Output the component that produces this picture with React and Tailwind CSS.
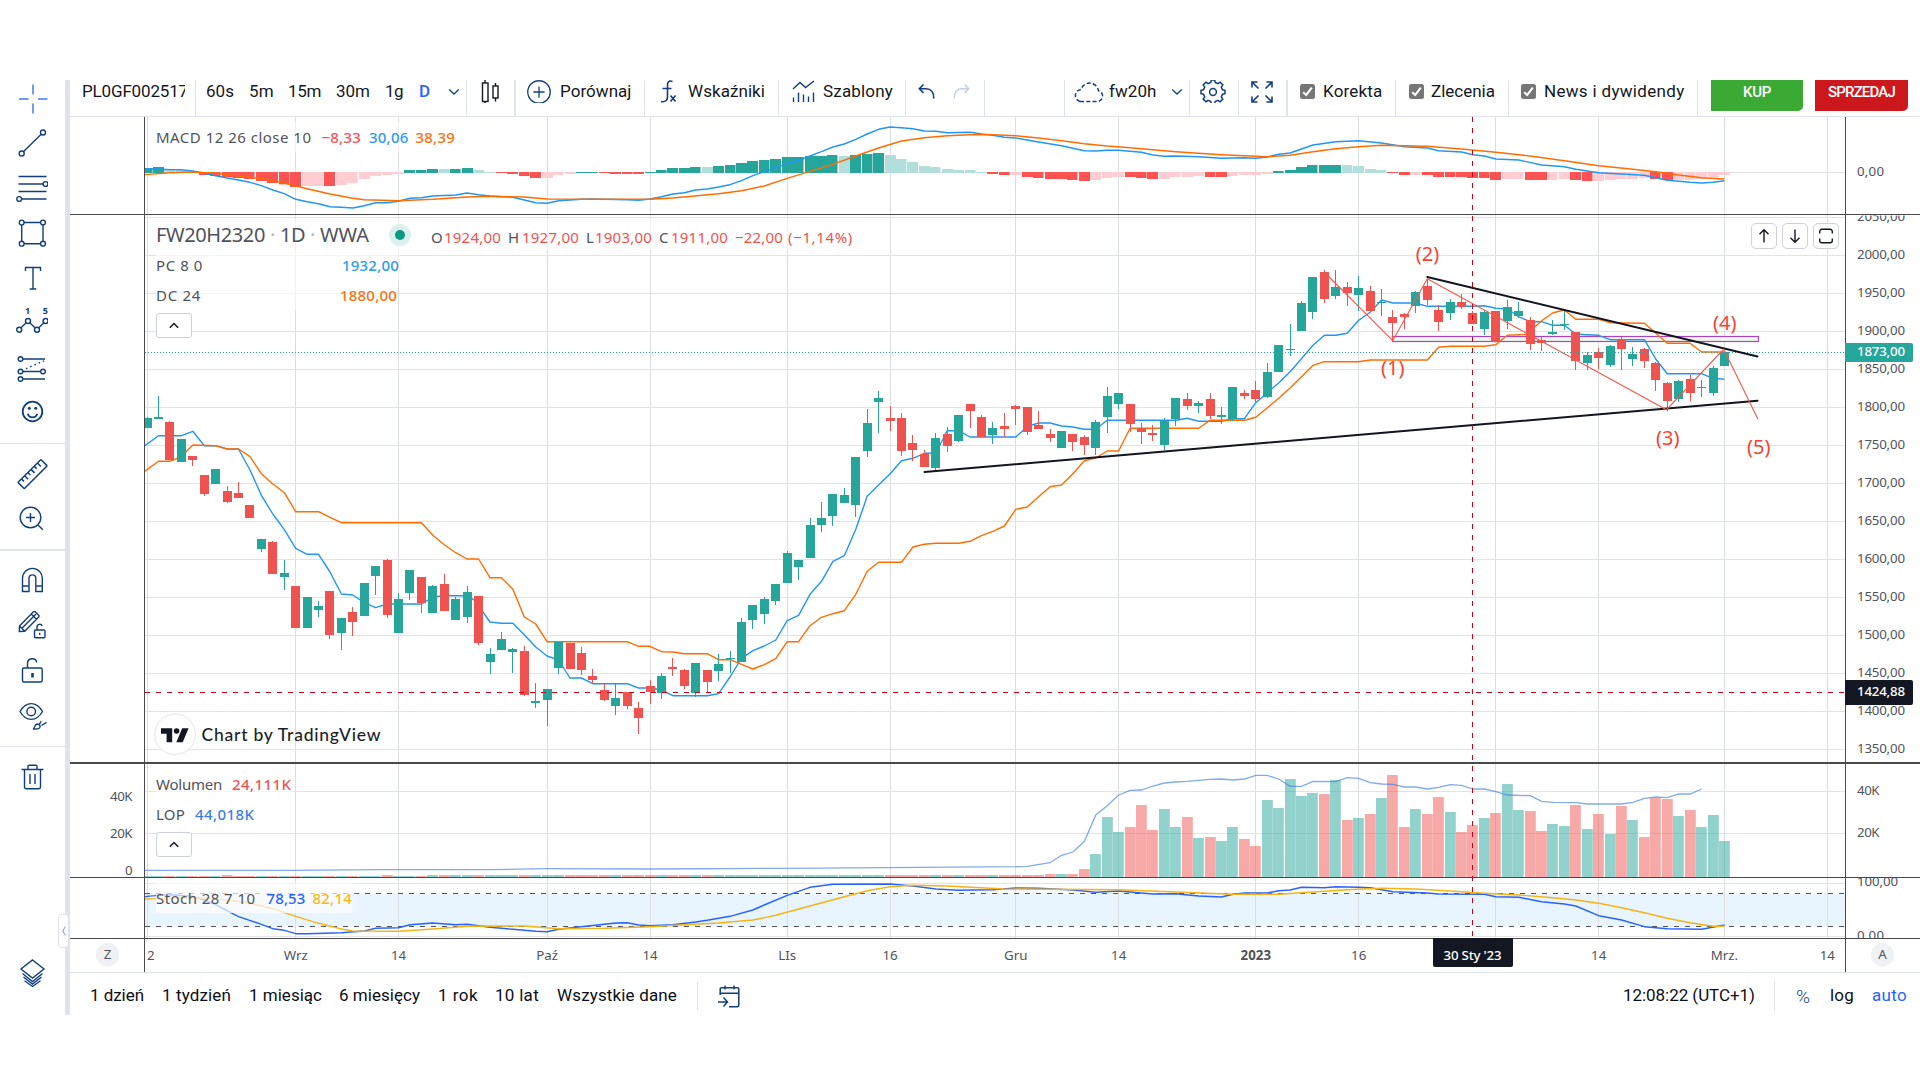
import React, { useLayoutEffect, useRef, useState } from "react";

/* Label whose tracking is computed so that it fills the given width. */
function Fit({ w, className = "", children }) {
  const ref = useRef(null);
  const [ls, setLs] = useState(0);
  useLayoutEffect(() => {
    const n = String(children).length;
    setLs((w - ref.current.getBoundingClientRect().width) / n);
  }, []);
  return (
    <span ref={ref} className={"inline-block shrink-0 whitespace-pre " + className} style={{ letterSpacing: ls }}>
      {children}
    </span>
  );
}

/* ---------- chart data (vertical values in thirds of a pixel) ---------- */

const X = (i) => 147.1 + 11.43 * i;
const U = 1;
const D = 0;

// [bodyTop, bodyBottom, high, low, direction]
const C1 = [
  [54,84,50,84,U],[51,57,-12,57,U],[66,180,63,180,D],[117,186,117,186,U],[168,180,168,198,D],[225,282,225,288,D],[207,252,207,252,U],
  [273,306,258,309,D],[279,294,246,294,D],[315,354,315,354,D],[417,447,417,456,U],[426,522,423,522,D],[519,531,480,570,U],
  [558,684,558,684,D],[591,684,591,684,U],[618,630,603,651,U],[573,705,573,717,D],[654,699,654,750,U],[636,666,621,708,D],
  [549,648,549,648,U],[498,528,498,585,U],[480,645,477,654,D],[597,699,579,699,U],[510,579,510,600,U],[531,609,531,639,D],
  [558,639,555,639,U],[552,633,522,633,D],[597,660,591,660,U],[576,651,558,669,U],[588,729,588,735,D],[762,786,744,822,U],
  [717,750,696,750,U],[747,756,744,819,U],[753,885,738,888,D],[903,909,849,924,U],[867,900,867,978,U],[726,804,726,822,U],
  [729,807,729,807,D],[759,810,741,825,D],[828,840,807,852,D],[870,900,852,903,D],[894,918,852,945,U],[876,918,876,927,D],
  [924,954,906,1002,D],[858,876,840,912,D],[828,879,819,897,U],[801,807,774,828,D],[810,858,807,867,D],[789,879,789,891,U],
  [810,846,810,879,D],[792,813,762,843,U],[774,777,753,819,U],[666,786,654,786,U],[615,660,615,687,U],[597,642,591,672,U],
  [552,603,552,615,U],[459,549,453,549,U],[480,501,480,540,U],[375,474,354,474,U],[354,375,306,396,U],[282,348,282,378,U],
  [285,309,264,309,U],[171,315,171,351,U],[69,153,27,171,U],[-6,6,-27,99,U],[54,63,18,93,D],[54,153,39,168,D],[129,150,105,183,D],
  [162,201,150,201,D],[114,204,99,213,U],[102,138,81,156,D],[45,123,45,126,U],[12,33,12,84,D],[51,111,45,111,D],[84,105,66,132,U],
  [78,87,39,111,D],[18,27,15,75,D],[21,96,21,105,D],[75,87,33,87,D],[102,114,87,126,D],[93,144,93,144,U],[102,126,102,153,D],
  [111,135,105,165,D],[66,144,60,165,U],[-12,51,-39,99,U],[-21,12,-21,27,U],[12,72,12,96,D],[84,96,69,132,D],[99,105,75,123,D],
  [63,135,54,150,U],[-6,57,-6,78,U],[-3,18,-21,30,D],[9,18,3,39,U],[-3,48,-21,57,D],[45,51,21,72,U],[-39,57,-39,63,U],
  [-21,-12,-30,-3,D],[-30,-3,-57,6,D],[-84,-9,-111,-6,U],
].map(([a,b,c,d,e]) => [a+1200,b+1200,c+1200,d+1200,e]);
const C2 = [
  [825,906,825,906,U],[837,840,762,858,U],[699,783,693,783,U],[621,726,621,747,U],[606,687,600,699,D],[651,678,600,687,U],
  [651,669,636,708,D],[654,675,618,723,U],[663,723,648,723,D],[695,698,657,738,U],[741,759,720,808,D],[732,741,729,777,D],
  [666,708,663,729,U],[648,690,627,705,D],[720,756,705,783,D],[696,729,687,750,U],[696,711,672,717,D],[729,762,724,762,D],
  [726,777,720,795,U],[723,816,723,816,D],[711,753,690,777,U],[723,738,696,745,U],[750,822,741,840,D],[810,819,801,843,D],
  [786,792,750,795,U],[762,765,720,780,U],[786,873,786,900,D],[855,879,846,900,U],[846,864,834,897,D],[828,885,825,891,U],
  [807,837,801,900,D],[852,867,831,888,U],[837,873,834,894,D],[879,930,876,963,D],[939,993,936,1022,D],[933,987,930,996,U],
  [927,969,915,993,D],[951,954,930,981,U],[894,969,888,978,U],[846,888,846,888,U],
].map(([a,b,c,d,e]) => [a+210,b+210,c+210,d+210,e]);
const CANDLES = C1.concat(C2);

// line helpers: flat lists of index, value
const pts = (list, base) => {
  const out = [];
  for (let k = 0; k < list.length; k += 2) out.push(X(list[k]).toFixed(1) + "," + ((list[k + 1] + base) / 3).toFixed(1));
  return out.join(" ");
};

const PC_A = [-0.25,139,1,107,3,107,4,94,5,137,6,137,7,147,8,147,9,210,10,286,11,342,12,389,13,445,14,463,15,463,16,516,17,582,18,585,19,608,20,623,21,612,24,612,25,591,26,587,28,587,28.7,602,30,666,31,670,32,670,33,704,34,741,35,768,36,780,37,834,38,834,39,851,42,851,43,864,44,864,45,870,46,887,49,887,50,881,51,831,52,775,53,752,54,738,55,720,56,662,57,646,58,583,59,544,60,484,61,467,62,388,63,289,64,255,65,222,66,182,67,175,68,160,69,160,70,92,71,92,72,111,76,111,77,80,78,69,79,69,80,78,81,81,82,88,83,88,84,61,90,61,91,55,92,64,94,64,95,56,96,56,97,8,98,-22];
const PC_B = [99.1,936,100,905,101,866,102,826,103,796,104,796,105,790,106,751,107,727,108,690,109,699,111,699,112,709,116,709,117,707,118,715,119,716,120,740,121,755,122,755,123,766,124,766,125,792,126,794,127,796,128,809,131,809,132,868,133,911,136,911,137,925,138,928];
const DC_A = [-0.25,215,1,184,2,184,3,170,4,135,6,137,7,147,8,147,9,170,10,221,11,252,12,278,13,335,15,335,16,352,17,368,24,368,25,406,26,434,27,458,28,477,29,477,30,533,31,533,32,568,33,651,34,672,35,725,42,725,43,739,44,739,45,755,46,756,47,761,49,761,50,779,51,779,52,793,53,807,54,794,55,776,56,725,57,725,58,677,59,652,60,641,61,632,62,583,63,514,64,487,66,487,67,441,68,433,69,430,71,430,72,424,73,407,74,394,75,378,76,328,77,321,78,290,79,260,80,255,81,221,82,182,83,174,84,153,85,153,86,85,92,85,93,61,96,61,97,52,98,24];
const DC_B = [99.1,982,100,954,101,920,102,886,103,875,106,875,107,870,112,870,113,832,114,829,117,829,118,824,119,796,120.7,793,122,752,123,728,124,720,125,748,127,748,128,758,131,760,133,820,135,820,136,846,138,846];
const MACD_B = [-0.25,296,1,296,2,298,3,298,4,302,5,309,6,316,7,323,8,329,9,336,10,346,11,359,12,370,13,387,14,394,15,400,16,409,17,411,18,413,19,406,20,397,21,397,22,393,23,384,24,382,25,377,27,374,28,368,29,373,30,377,31,379,32,381,33,389,34,397,35,399,36,391,38,387,39,386,42,388,43,390,44,386,45,379,46,371,47,367,48,359,49,356,50,350,51,343,52,331,53,316,54,304,55,292,56,279,57,270,58,257,59,244,60,230,61,221,62,207,63,191,64,177,65,170,66,172,67,175,68,182,69,183,70,187,72,186,73,191,74,195,75,201,76,203,77,209,78,215,80,226,82,241,83,242,84,240,85,240,87,246,88,254,89,258,90,257,92,259,94,264,96,262,97,264,98,260,99,252,100,248,101,236,102,224,104,214,106,211,108,218,110,229,112,233,113,241,115,245,116,253,117,257,118,266,120,269,122,284,124,289,125,297,127,307,129,311,131,315,133,330,135,336,136,338,137,336,138,331];
const MACD_O = [-0.25,313,2,307,4,305,6,309,8,317,10,325,12,338,14,355,16,371,18,384,19,388,22,391,25,387,28,380,30,378,33,380,35,386,40,387,44,387,46,383,50,370,52,361,54,347,56,324,58,303,60,282,62,257,64,233,66,212,68,202,70,196,72,193,74,193,76,196,78,203,80,211,82,220,84,227,86,232,90,244,94,253,98,259,99,257,100,255,102,244,104,235,106,229,108,225,110,226,112,228,115,236,118,246,121,257,124,271,127,286,130,297,132,304,134,314,136,322,138,326];
const HIST = "294G 291G 301g 301g 304g 315R 318R 322R 324R 327R 333R 339R 343R 351R 348r 348r 348R 345r 339r 327r 318r 315r 312r 300G 300G 297G 297g 297G 294G 300g 306g 309R 312R 318R 324R 324r 315r 312r 306G 306G 309R 312R 312R 312R 306G 300G 294G 294G 291G 291g 288G 285G 279G 273G 270G 267G 261G 261G 258G 258G 255G 258g 255G 252G 249G 255g 267g 276g 288g 291g 297g 300g 300g 306g 312R 315R 315r 321R 324R 327R 327R 330R 333R 330r 324r 321r 321R 324R 327R 327r 321r 321r 318r 321R 321R 318r 315r 315r 312r 303G 300G 291G 285G 285G 285G 285g 288g 297g 300g 309R 315R 315r 315R 321R 321R 321R 324R 324R 330R 327r 327r 330R 330R 330r 327r 330R 333R 333r 330r 327r 327r 324r 327R 330R 330r 330r 327r 321r 315r".split(" ");
const HC = { G: "#26a69a", g: "#b2dfdb", R: "#ff5252", r: "#ffcdd2" };
const VOL = [432,432,432,417,372,261,306,291,225,300,237,291,261,324,321,333,291,327,348,210,234,147,198,189,192,150,270,264,252,204,135,291,237,252,201,246,306,285,264,249,162,240,243,303,282,288,225,297,252,312,228,270,321,204,207,258,240,291,255,333];
const volTop = (i) => (i >= 79 ? VOL[i - 79] : i === 7 || i === 21 || i >= 25 ? 435 : 438);
const LOP = [-0.25,421,13,421,20,419,30,419,35,416,44,417,56,415,76,410,77,409,79,398,80,376,81,366,82,334,83,255,84,227,85,195,86,181,87,180,88,168,89,159,90,156,91,154,93,148,94,147,95,150,96,147,97,136,98,136,99,147,100,169,101,169,102,154,104,155,105,143,106,145,107,158,108,162,109,163,110,171,111,171,112,177,113,172,114,164,115,166,116,177,117,177,118,185,119,195,121,197,122,214,123,217,125,218,126,222,129,222,130,217,131,205,132,201,133,203,134,192,135,192,136,177];
const ST_B = [-0.25,500,1,496,2,494,4,499,5,510,6,524,7,542,8,560,10,583,11,596,12,601,13,611,14,611,17,608,19,603,20,595,22,593,23,584,25,579,27,584,28,583,30,592,32,598,34,604,35,605,36,598,38,590,41,579,42,578,43,585,44,587,46,584,48,576,49,571,51,559,53,540,54,525,56,496,58,472,60,463,65,462,67,468,69,477,71,481,74,479,76,474,78,475,81,480,83,487,85,483,86,486,88,492,90,491,92,498,94,501,95,493,96,489,98,489,99,482,100,480,101,472,103,473,104,470,106,472,107,473,108,479,109,485,112,489,113,492,117,493,118,500,120,502,122,515,124,522,125,528,127,557,129,570,131,590,133,596,136,598,138,585];
const ST_O = [-0.25,507,2,504,5,504,7,510,9,519,11,536,13,559,15,580,17,597,18,603,22,604,25,597,28,589,33,588,36,596,40,595,44,590,47,584,50,579,53,570,55,556,58,528,61,500,63,482,65,470,67,466,70,468,75,477,85,479,90,486,95,493,99,493,102,486,105,479,108,475,111,477,114,483,117,490,120,495,123,503,125,510,127,520,129,533,131,548,133,565,135,578,137,589,138,589];

const GRID = [0, 13, 22, 35, 44, 56, 65, 76, 85, 97, 106, 118, 127, 138, 147];
const TIMES = ["", "Wrz", "14", "Paź", "14", "LIs", "16", "Gru", "14", "2023", "16", "", "14", "Mrz.", "14"];
const PRICES = Array.from({ length: 15 }, (_, k) => 2050 - 50 * k);
const py = (p) => 255.4 + (2000 - p) * 0.76;

function AxisText({ x, y, children, anchor = "start", fill = "#50535b", weight = 400, len }) {
  return (
    <text x={x} y={Number(y) + 4.7} textAnchor={anchor} fill={fill} fontWeight={weight} textLength={len} fontSize="13.3">
      {children}
    </text>
  );
}

function Chart() {
  return (
    <svg className="block font-['Noto_Sans','Open_Sans',sans-serif]" width="1850" height="855" viewBox="70 117 1850 855">
      <defs>
        <clipPath id="plot"><rect x="145" y="117" width="1700" height="821" /></clipPath>
        <clipPath id="mainAxis"><rect x="1846" y="215.5" width="74" height="547" /></clipPath>
        <clipPath id="stochAxis"><rect x="1846" y="878" width="74" height="60" /></clipPath>
      </defs>

      <rect x="145" y="893.5" width="1700" height="33" fill="#e8f4fe" />
      <g fill="#e3e3e4" shapeRendering="crispEdges">
        {GRID.map((i) => <rect key={i} x={Math.floor(X(i))} y="117" width="1" height="821" fill="#dcdfe2" />)}
        {PRICES.map((p) => <rect key={p} x="145" y={Math.floor(py(p))} width="1700" height="1" />)}
        {[172, 791, 833, 883, 936].map((y) => <rect key={y} x="145" y={y} width="1700" height="1" />)}
      </g>

      <g clipPath="url(#plot)">
        {HIST.map((h, i) => {
          const v = parseInt(h, 10);
          const c = h.slice(-1);
          const up = c === "G" || c === "g";
          const y0 = up ? v : 306;
          const y1 = up ? 309 : v;
          return <rect key={i} x={Math.round(X(i) - 5.5)} y={(y0 + 210) / 3} width={i % 3 ? 11 : 10.5} height={Math.max(1, (y1 - y0) / 3)} fill={HC[c]} />;
        })}
        <g fill="none" strokeWidth="1.4" strokeLinejoin="round">
          <polyline points={pts(MACD_B, 211)} stroke="#2196f3" />
          <polyline points={pts(MACD_O, 211)} stroke="#ff6d00" />
        </g>

        {CANDLES.map((c, i) => {
          const y = 877 - (2190 + volTop(i)) / 3;
          return <rect key={i} x={Math.round(X(i) - 5.5)} y={877 - y} width="10.8" height={y} fill={c[4] ? "#26a69a" : "#ef5350"} fillOpacity="0.5" />;
        })}
        <polyline points={pts(LOP, 2190)} fill="none" stroke="#3f7fe0" strokeOpacity="0.66" strokeWidth="1.3" />

        <g stroke="#50535e" strokeDasharray="5 6" shapeRendering="crispEdges">
          <line x1="145" x2="1845" y1="893.5" y2="893.5" />
          <line x1="145" x2="1845" y1="926.5" y2="926.5" />
        </g>
        <g fill="none" strokeWidth="1.4" strokeLinejoin="round">
          <polyline points={pts(ST_B, 2190)} stroke="#2962ff" />
          <polyline points={pts(ST_O, 2190)} stroke="#f5b315" />
        </g>

        <rect x="1392.5" y="336.5" width="366" height="5" fill="#eef7ee" stroke="#a846bf" strokeWidth="1.2" />
        <g fill="none" strokeWidth="1.4" strokeLinejoin="round">
          <polyline points={pts(PC_A, 1200) + " " + pts(PC_B, 210)} stroke="#2196f3" />
          <polyline points={pts(DC_A, 1200) + " " + pts(DC_B, 210)} stroke="#ff6d00" />
        </g>
        {CANDLES.map(([t, b, h, l, up], i) => (
          <g key={i} fill={up ? "#26a69a" : "#ef5350"} shapeRendering="crispEdges">
            <rect x={Math.round(X(i) - 0.5)} y={h / 3} width="1" height={(l - h) / 3} />
            <rect x={Math.round(X(i) - 4.5)} y={t / 3} width="9" height={Math.max(1, (b - t) / 3)} />
          </g>
        ))}
        <line x1="145" x2="1845" y1="352.5" y2="352.5" stroke="#26a69a" strokeDasharray="1 2" shapeRendering="crispEdges" />
        <g stroke="#12141f" strokeWidth="2" strokeLinecap="round">
          <line x1="924.5" y1="472" x2="1757.5" y2="400.7" />
          <line x1="1427.3" y1="277" x2="1757.5" y2="356.5" />
        </g>
        <polyline points="1328.2,276 1392.7,340.7 1427.3,278.7 1666.5,409.7 1723.7,349.3 1758,419.3" fill="none" stroke="#f4574d" strokeWidth="1.1" />
        <line x1="145" x2="1845" y1="692.5" y2="692.5" stroke="#cc0014" strokeDasharray="5 6" shapeRendering="crispEdges" />
        <line x1="1472.5" x2="1472.5" y1="117" y2="938" stroke="#cc0014" strokeDasharray="5 6" shapeRendering="crispEdges" />
        <g fill="#f44336" textAnchor="middle" fontSize="20">
          <text x="1392.7" y="375">(1)</text>
          <text x="1427.5" y="261">(2)</text>
          <text x="1667.8" y="445">(3)</text>
          <text x="1724.8" y="330">(4)</text>
          <text x="1758.8" y="454">(5)</text>
        </g>
      </g>

      <g>
        <circle cx="175" cy="734.3" r="20.3" fill="#fff" stroke="#e6e6e8" />
        <g fill="#131722">
          <path d="M161 728.2h11.2v14h-5.6v-8.4H161z" />
          <circle cx="176.6" cy="731" r="2.8" />
          <path d="M182.2 728.2h6.4l-5.9 14h-6.4z" />
        </g>
        <text x="201.5" y="741" fontSize="17.5" fill="#1c1e28" fontWeight="500" textLength="179" className="font-['Lato',sans-serif]">Chart by TradingView</text>
      </g>

      <g fill="#4a4a4c" shapeRendering="crispEdges">
        <rect x="70" y="214" width="1850" height="1" />
        <rect x="70" y="762" width="1850" height="2" />
        <rect x="70" y="877" width="1850" height="1" />
        <rect x="70" y="938" width="1850" height="1" />
        <rect x="144" y="117" width="1" height="855" />
        <rect x="1845" y="117" width="1" height="855" />
      </g>

      <AxisText x="1857" y="171" len="27">0,00</AxisText>
      <g clipPath="url(#mainAxis)">
        {PRICES.map((p) => <AxisText key={p} x="1857" y={py(p) - 1.6} len="48">{p + ",00"}</AxisText>)}
      </g>
      <AxisText x="1857" y="790.7" len="22.5">40K</AxisText>
      <AxisText x="1857" y="832.7" len="22.5">20K</AxisText>
      <g clipPath="url(#stochAxis)">
        <AxisText x="1857" y="881.5" len="41">100,00</AxisText>
        <AxisText x="1857" y="935" len="27">0,00</AxisText>
      </g>
      <AxisText x="132.5" y="796.7" anchor="end" len="22.5">40K</AxisText>
      <AxisText x="132.5" y="833.7" anchor="end" len="22.5">20K</AxisText>
      <AxisText x="132.5" y="870" anchor="end">0</AxisText>

      {GRID.map((g, k) => TIMES[k] && <AxisText key={g} x={X(g)} y={955.2} anchor="middle" weight={TIMES[k] === "2023" ? 700 : 400}>{TIMES[k]}</AxisText>)}
      <AxisText x="147" y={955.2}>2</AxisText>

      <path d="M1845 343h66a2 2 0 0 1 2 2v15a2 2 0 0 1-2 2h-66z" fill="#26a69a" />
      <AxisText x="1857" y="351.5" fill="#fff" weight="500" len="48">1873,00</AxisText>
      <path d="M1845 680h66a2 2 0 0 1 2 2v21a2 2 0 0 1-2 2h-66z" fill="#131722" />
      <AxisText x="1857" y="691.5" fill="#fff" weight="500" len="48">1424,88</AxisText>
      <path d="M1433 938h80v27a2 2 0 0 1-2 2h-76a2 2 0 0 1-2-2z" fill="#131722" />
      <AxisText x="1472.5" y="955.2" fill="#fff" weight="500" anchor="middle" len="58">30 Sty '23</AxisText>

      <circle cx="107.5" cy="954.7" r="11.7" fill="#f0f1f5" />
      <AxisText x="107.5" y="954.5" anchor="middle">Z</AxisText>
      <circle cx="1882.5" cy="954.7" r="11.7" fill="#f0f1f5" />
      <AxisText x="1882.5" y="954.5" anchor="middle">A</AxisText>
    </svg>
  );
}

/* ---------- icons ---------- */

function Ico({ s = 32, color = "#123f7c", sw = 1.4, className = "", children }) {
  return (
    <svg width={s} height={s} viewBox="0 0 32 32" fill="none" stroke={color} strokeWidth={sw} className={"shrink-0 " + className}>
      {children}
    </svg>
  );
}

const Chevron = ({ className = "" }) => (
  <svg width="12" height="8" viewBox="0 0 12 8" fill="none" stroke="#1b4782" strokeWidth="1.4" className={"shrink-0 " + className}><path d="M1.2 1.5 6 6l4.8-4.5" /></svg>
);

const Check = () => (
  <svg width="15" height="15" viewBox="0 0 15 15" className="shrink-0"><rect width="15" height="15" rx="2.5" fill="#767676" /><path d="M3.2 8.2 6.2 11 11.8 3.6" fill="none" stroke="#fff" strokeWidth="2.1" /></svg>
);

const SideBtn = ({ className, children }) => <button className={"flex w-full items-center justify-center pr-px " + className}>{children}</button>;

function Sidebar() {
  return (
    <aside className="relative flex h-[935px] w-[70px] shrink-0 flex-col border-r-[5px] border-[#e0e3eb]">
      <SideBtn className="mb-[3px] h-[38px]">
        <Ico color="#4a78f5" sw={1.5}><path d="M17 1.500v10M17 20.500v10M3 16h9.500M22 16h9.500" /></Ico>
      </SideBtn>
      <SideBtn className="h-[45px] pb-px">
        <Ico><circle cx="5.700" cy="26.500" r="2.500" /><circle cx="27" cy="5.500" r="2.500" /><path d="M7.600 24.600 25.200 7.300" /></Ico>
      </SideBtn>
      <SideBtn className="h-[45px] pb-px">
        <Ico><path d="M2.500 4.500h28M2.500 12h24.500M2.500 19.500h28M5.500 27h25" /><circle cx="29.500" cy="12" r="2.400" /><circle cx="3.200" cy="27" r="2.400" /></Ico>
      </SideBtn>
      <SideBtn className="h-[45px] pb-px">
        <Ico><circle cx="5.700" cy="5.500" r="2.400" /><circle cx="27" cy="5.500" r="2.400" /><circle cx="5.700" cy="26.700" r="2.400" /><circle cx="27" cy="26.700" r="2.400" /><path d="M8 5.500h16.600M8 26.700h16.600M5.700 8v16.300M27 8v16.300" /></Ico>
      </SideBtn>
      <SideBtn className="h-[45px] pb-px">
        <Ico><path d="M9.500 9V5.500h15V9M17 5.500v21.500M13.700 27h6.600" /></Ico>
      </SideBtn>
      <SideBtn className="h-[43px] pb-px">
        <Ico>
          <circle cx="3.200" cy="23.700" r="2.500" /><circle cx="12" cy="15" r="2.500" /><circle cx="21" cy="23.700" r="2.500" /><circle cx="29.600" cy="15" r="2.500" /><path d="m5 21.800 5.200-5M13.800 16.800l5.400 5.100M22.700 21.800l5.200-5" />
          <g fill="#123f7c" stroke="none" fontSize="9" fontWeight="700" textAnchor="middle" className="font-['Open_Sans',sans-serif]"><text x="11.700" y="8">1</text><text x="29.300" y="8">5</text></g>
        </Ico>
      </SideBtn>
      <SideBtn className="h-[48px]">
        <Ico><circle cx="4.500" cy="7" r="2.300" /><circle cx="4.500" cy="19.500" r="2.300" /><circle cx="27" cy="19.500" r="2.300" /><circle cx="4.500" cy="27" r="2.300" /><path d="M7 7h22M7 19.500h17.500M7 27h22" /><path d="M10 16.700 28 8.800" strokeDasharray="1.600 3" /></Ico>
      </SideBtn>
      <SideBtn className="h-[40px]">
        <Ico sw={1.8}><circle cx="16.500" cy="15.500" r="9.800" /><path d="M11.700 17.800a5 5 0 0 0 9.600 0" /><g fill="#123f7c" stroke="none"><circle cx="13.300" cy="12.300" r="1.500" /><circle cx="19.700" cy="12.300" r="1.500" /></g></Ico>
      </SideBtn>
      <div className="mt-[11px] h-px bg-[#e0e3eb]" />
      <SideBtn className="mt-2 h-11">
        <Ico sw={1.5}><g transform="translate(.4 .3) rotate(-45 16 16)"><rect x="0" y="11.500" width="32.500" height="9" rx="1" /><path d="M5 11.500v3.500M9.500 11.500v5M14 11.500v3.500M18.500 11.500v5M23 11.500v3.500M27.500 11.500v5" /></g></Ico>
      </SideBtn>
      <SideBtn className="h-11">
        <Ico><circle cx="14.500" cy="15.500" r="10.300" /><path d="M14.500 11v9M10 15.500h9M22 23l4.800 4.800" /></Ico>
      </SideBtn>
      <div className="mt-[9px] h-0.5 bg-[#e0e3eb]" />
      <SideBtn className="mt-[7px] h-11">
        <Ico><path d="M6.500 27.500V14.300a9.900 9.900 0 0 1 19.800 0v13.200h-6.500V14.300a3.400 3.400 0 0 0-6.800 0v13.200zM6.500 22h6.500M19.800 22h6.500" /></Ico>
      </SideBtn>
      <SideBtn className="h-[46px]">
        <Ico><path d="M3.500 17 17.500 2.800a1.200 1.200 0 0 1 1.700 0l3.500 3.400a1.200 1.200 0 0 1 0 1.700L8.700 22.200l-5.400.3zM3.500 17l5.200 5.200M6.200 19 20 5M15.200 5l5.200 5.200" /><rect x="18.500" y="21" width="10.500" height="7.800" rx="1" /><path d="M21 21v-3a2.700 2.700 0 0 1 5.200-1M23.700 23.700v2.300" /></Ico>
      </SideBtn>
      <SideBtn className="h-[45px] pb-px">
        <Ico><rect x="6.500" y="14" width="19.700" height="14" rx="1.500" /><path d="M11.500 14V9.500a4.700 4.700 0 0 1 9.300-1" /><path d="M16.500 19v4.500" strokeWidth="2.600" /></Ico>
      </SideBtn>
      <SideBtn className="h-[46px]">
        <Ico><path d="M4 11.500c6-10.500 16.500-10.500 22.500 0-6 10.500-16.500 10.500-22.500 0z" /><circle cx="15.200" cy="11.500" r="4.300" /><path d="M17 29c2.500-.7.800-4.500 4-5 2.800 0 4 2.300 2.500 4-1.500 1.300-4 1-6.500 1zM23.500 24.200l1.500-3M25.500 25.500l5-3.200" /></Ico>
      </SideBtn>
      <div className="mt-[7px] h-px bg-[#e0e3eb]" />
      <SideBtn className="mt-2 h-11">
        <Ico><path d="M5.500 8.500h22M8.500 8.500V26a1.800 1.800 0 0 0 1.800 1.800h12.400A1.800 1.800 0 0 0 24.500 26V8.500M12 8.500V5.300A1 1 0 0 1 13 4.300h7a1 1 0 0 1 1 1v3.200M14 13v10M19 13v10" /></Ico>
      </SideBtn>
      <SideBtn className="mt-[152px] h-11">
        <Ico><path d="M16.500 3 28 12 16.500 21 5 12zM6.500 16.500l10 8 10-8M7.500 20l9 7 9-7M8.500 23.800l8 5.700 8-5.700" /></Ico>
      </SideBtn>
      <div className="absolute left-[58px] top-[834px] flex h-[34px] w-[11px] items-center justify-center rounded-[4px] border border-[#e0e3eb] bg-white">
        <svg width="4" height="10" viewBox="0 0 4 10" fill="none" stroke="#7f93ad"><path d="M3.400 .500 .800 5l2.600 4.500" /></svg>
      </div>
    </aside>
  );
}

function Cell({ w, thick, children }) {
  return (
    <div className={"flex h-[36px] shrink-0 items-start border-[#e0e3eb] " + (thick ? "border-r-2" : "border-r")} style={{ width: w }}>
      <div className="flex h-[23px] w-full items-center overflow-hidden">{children}</div>
    </div>
  );
}

const T = ({ w, className = "", children }) => <Fit w={w} className={"-mt-[2px] " + className}>{children}</Fit>;

function Toolbar() {
  return (
    <header className="flex h-[37px] border-b border-[#e0e3eb] text-[17px] leading-[22px] text-[#131722]">
      <Cell w={126}><div className="ml-3 flex w-[103px] overflow-hidden"><T w={106}>PL0GF002517</T></div></Cell>
      <Cell w={271}>
        <T w={28} className="ml-[10px]">60s</T>
        <T w={25} className="ml-[15px]">5m</T>
        <T w={33} className="ml-[14px]">15m</T>
        <T w={34} className="ml-[15px]">30m</T>
        <T w={18} className="ml-[15px]">1g</T>
        <T w={12} className="ml-[16px] font-medium text-[#2962ff]">D</T>
        <Chevron className="ml-[17px]" />
      </Cell>
      <Cell w={49} thick>
        <svg width="19" height="28" viewBox="0 0 19 28" fill="none" stroke="#131722" strokeWidth="1.400" className="ml-[14px] shrink-0"><path d="M4 1.500V5M4 23.500V27M14.500 5v3M14.500 20v3.500" /><rect x="1.500" y="5" width="5.500" height="18.500" /><rect x="12" y="8" width="5" height="12" /></svg>
      </Cell>
      <Cell w={129}>
        <Ico s={24} sw={1.7} className="ml-[11px]"><circle cx="16" cy="16" r="15" /><path d="M16 8.500v15M8.500 16h15" /></Ico>
        <T w={71.500} className="ml-[9px]">Porównaj</T>
      </Cell>
      <Cell w={134}>
        <svg width="18" height="23" viewBox="0 0 18 23" fill="none" stroke="#123f7c" strokeWidth="1.600" className="ml-[14px] shrink-0"><path d="M13.500 1.500C9.500 0 8.500 2.500 8.500 5v12c0 3-2 5.500-6.500 4.500M3.500 8.500h9M11.500 15.500l5 6M16.500 15.500l-5 6" /></svg>
        <T w={77} className="ml-[11px]">Wskaźniki</T>
      </Cell>
      <Cell w={127}>
        <svg width="23" height="23" viewBox="0 0 23 23" fill="none" stroke="#123f7c" strokeWidth="1.400" className="ml-[13px] shrink-0"><path d="M1 9 8 2.500l5.500 5L22 1M1.500 17.500V22M6.500 12.500V22M11.500 14.500V22M16.500 16.500V22M21.500 12.500V22" /></svg>
        <T w={70} className="ml-[8px]">Szablony</T>
      </Cell>
      <Cell w={79}>
        <svg width="17" height="17" viewBox="0 0 17 17" fill="none" stroke="#123f7c" strokeWidth="1.600" className="ml-[12px] shrink-0"><path d="M5.500 1.500 1.300 5.700l4.200 4.200M1.500 5.700H8c5 0 7.800 3.300 7.800 9.800" /></svg>
        <svg width="17" height="17" viewBox="0 0 17 17" fill="none" stroke="#c3cfdd" strokeWidth="1.600" className="ml-[18px] shrink-0"><path d="m11.500 1.500 4.200 4.200-4.200 4.200M15.500 5.700H9c-5 0-7.800 3.300-7.800 9.800" /></svg>
      </Cell>
      <Cell w={80} />
      <Cell w={125}>
        <svg width="31" height="22" viewBox="0 0 31 22" fill="none" stroke="#123f7c" strokeWidth="1.500" strokeDasharray="4 2.300" className="ml-[8px] shrink-0"><path d="M7 20.500h17.500a5.500 5.500 0 0 0 1-10.800A9 9 0 0 0 8 8.500a6.100 6.100 0 0 0-1 12z" /></svg>
        <T w={47.500} className="ml-[5px]">fw20h</T>
        <Chevron className="ml-[14px]" />
      </Cell>
      <Cell w={49}>
        <svg width="26" height="26" viewBox="0 0 26 26" fill="none" stroke="#123f7c" strokeWidth="1.500" className="ml-[10px] shrink-0"><circle cx="13" cy="13" r="3.400" /><path d="M10.800 3.500 11.300 1h3.400l.5 2.500 2.800 1.200 2.100-1.500 2.700 2.700-1.500 2.100 1.200 2.800 2.500.5v3.400l-2.500.5-1.200 2.800 1.500 2.100-2.700 2.700-2.100-1.500-2.800 1.200-.5 2.500h-3.400l-.5-2.500L8 21.300l-2.100 1.500-2.700-2.700L4.700 18l-1.200-2.800L1 14.700v-3.400l2.500-.5L4.700 8 3.200 5.900l2.700-2.700L8 4.700z" /></svg>
      </Cell>
      <Cell w={49} thick>
        <svg width="22" height="22" viewBox="0 0 22 22" fill="none" stroke="#123f7c" strokeWidth="1.600" className="ml-[12px] shrink-0"><path d="M1 6.500V1h5.500M15.500 1H21v5.500M21 15.500V21h-5.500M6.500 21H1v-5.500M1 1l6.500 6.500M21 1l-6.500 6.500M21 21l-6.500-6.500M1 21l6.500-6.500" /></svg>
      </Cell>
      <Cell w={108}><span className="ml-3" /><Check /><T w={59.500} className="ml-2">Korekta</T></Cell>
      <Cell w={113}><span className="ml-[13px]" /><Check /><T w={64} className="ml-[7px]">Zlecenia</T></Cell>
      <Cell w={189}><span className="ml-[12px]" /><Check /><T w={140.500} className="ml-2">News i dywidendy</T></Cell>
      <button className="ml-[13px] flex h-[31px] w-[92px] justify-center rounded-br-[5px] bg-[#3aaa35] pt-px text-[15px] text-white"><Fit w={28} className="font-medium">KUP</Fit></button>
      <button className="ml-3 flex h-[31px] w-[93px] justify-center rounded-br-[5px] bg-[#cc171d] pt-px text-[15px] text-white"><Fit w={67} className="font-medium">SPRZEDAJ</Fit></button>
    </header>
  );
}

const Row = ({ children, className = "h-[30px]" }) => <div className={"flex w-fit items-center bg-white/60 " + className}>{children}</div>;

const Collapse = () => (
  <button className="flex h-[25px] w-[36px] items-center justify-center rounded-[3px] border border-[#ced0da] bg-white">
    <svg width="10" height="7" viewBox="0 0 10 7" fill="none" stroke="#131722" strokeWidth="1.500"><path d="M.800 5.700 5 1.500l4.200 4.200" /></svg>
  </button>
);

function PaneBtn({ children, className = "" }) {
  return (
    <button className={"flex h-[26px] w-[26px] items-center justify-center rounded-[5px] border border-[#cfd1dc] bg-white " + className}>
      <svg width="16" height="16" viewBox="0 0 16 16" fill="none" stroke="#131722" strokeWidth="1.400">{children}</svg>
    </button>
  );
}

function Legends() {
  return (
    <div className="font-['Noto_Sans','Open_Sans',sans-serif] text-[15px] text-[#50535b]">
      <div className="absolute left-[86px] top-[5px]">
        <Row>
          <Fit w={155.500}>MACD 12 26 close 10</Fit>
          <Fit w={39.500} className="ml-[10px] font-medium text-[#f7525f]">−8,33</Fit>
          <Fit w={39.500} className="ml-[8px] font-medium text-[#2e9bf2]">30,06</Fit>
          <Fit w={39.500} className="ml-[7px] font-medium text-[#fa7211]">38,39</Fit>
        </Row>
      </div>
      <div className="absolute left-[86px] top-[102px]">
        <Row className="h-[31px]">
          <span className="flex text-[20px]">
            <Fit w={109}>FW20H2320</Fit><Fit w={15} className="text-[#b2b5be]"> · </Fit>
            <Fit w={25}>1D</Fit><Fit w={15} className="text-[#b2b5be]"> · </Fit><Fit w={49}>WWA</Fit>
          </span>
          <span className="ml-[20px] flex h-[22px] w-[22px] items-center justify-center rounded-full bg-[#dcf1ee]"><span className="h-[10px] w-[10px] rounded-full bg-[#089981]" /></span>
          <span className="mt-[5px] flex text-[#ef5350]">
            <Fit w={13} className="ml-[20px] text-[#50535b]">O</Fit><Fit w={57}>1924,00</Fit>
            <Fit w={14} className="ml-[7px] text-[#50535b]">H</Fit><Fit w={57}>1927,00</Fit>
            <Fit w={9} className="ml-[7px] text-[#50535b]">L</Fit><Fit w={57}>1903,00</Fit>
            <Fit w={12} className="ml-[7px] text-[#50535b]">C</Fit><Fit w={57}>1911,00</Fit>
            <Fit w={48} className="ml-[7px]">−22,00</Fit><Fit w={65} className="ml-[5px]">(−1,14%)</Fit>
          </span>
        </Row>
        <Row><Fit w={47}>PC 8 0</Fit><Fit w={57} className="ml-[139px] font-medium text-[#2e9bf2]">1932,00</Fit></Row>
        <Row><Fit w={45}>DC 24</Fit><Fit w={57} className="ml-[139px] font-medium text-[#fa7211]">1880,00</Fit></Row>
        <div className="mt-[3px]"><Collapse /></div>
      </div>
      <div className="absolute left-[86px] top-[652px]">
        <Row><Fit w={66}>Wolumen</Fit><Fit w={59.500} className="ml-[10px] font-medium text-[#ef5350]">24,111K</Fit></Row>
        <Row><Fit w={29}>LOP</Fit><Fit w={59.500} className="ml-[10px] font-medium text-[#3f7fe0]">44,018K</Fit></Row>
        <div className="mt-[3px]"><Collapse /></div>
      </div>
      <div className="absolute left-[80px] top-[766px] bg-white/20 pl-[6px] pr-[4px]">
        <Row className="h-[30px]"><Fit w={99.500}>Stoch 28 7 10</Fit><Fit w={39} className="ml-[11px] font-medium text-[#2962ff]">78,53</Fit><Fit w={39.500} className="ml-[7px] font-medium text-[#fbb910]">82,14</Fit></Row>
      </div>
      <div className="absolute left-[1681px] top-[106px] flex">
        <PaneBtn><path d="M8 14.500V2M3.500 6.200 8 1.700l4.500 4.500" /></PaneBtn>
        <PaneBtn className="ml-[5px]"><path d="M8 1.500V14M3.500 9.800 8 14.300l4.500-4.500" /></PaneBtn>
        <PaneBtn className="ml-[5px]"><path d="M1.700 5.500V3.500a2.200 2.200 0 0 1 2.200-2.200h8.200a2.200 2.200 0 0 1 2.200 2.200v2M14.300 10.500v2a2.200 2.200 0 0 1-2.200 2.200H3.900a2.200 2.200 0 0 1-2.200-2.200v-2" /></PaneBtn>
      </div>
    </div>
  );
}

function BottomBar() {
  return (
    <footer className="flex h-[43px] items-center border-t border-[#e0e3eb] pt-[4px] text-[17px] text-[#0c0e15]">
      <Fit w={54} className="ml-[20px]">1 dzień</Fit>
      <Fit w={69} className="ml-[18px]">1 tydzień</Fit>
      <Fit w={73} className="ml-[18px]">1 miesiąc</Fit>
      <Fit w={81} className="ml-[17px]">6 miesięcy</Fit>
      <Fit w={40} className="ml-[18px]">1 rok</Fit>
      <Fit w={44} className="ml-[17px]">10 lat</Fit>
      <Fit w={120} className="ml-[18px]">Wszystkie dane</Fit>
      <div className="ml-[20px] h-[28px] w-px bg-[#e0e3eb]" />
      <svg width="22" height="23" viewBox="0 0 22 23" fill="none" stroke="#123f7c" strokeWidth="1.500" className="ml-[20px]"><path d="M2.200 10V4a1.300 1.300 0 0 1 1.300-1.300h16A1.300 1.300 0 0 1 20.800 4v16.200a1.600 1.600 0 0 1-1.600 1.600H11M2.200 8.200h18.600M7 .500v4M16 .500v4M0 17h9M5.500 12.500l4 4.500-4 4.500" /></svg>
      <Fit w={132} className="ml-auto">12:08:22 (UTC+1)</Fit>
      <div className="ml-[19px] h-[28px] w-px bg-[#e0e3eb]" />
      <Fit w={17} className="ml-[21px] mt-[2px] text-[19px] font-light text-[#1b4782]">%</Fit>
      <Fit w={24} className="ml-[17px]">log</Fit>
      <Fit w={35} className="ml-[18px] mr-[13px] text-[#2962ff]">auto</Fit>
    </footer>
  );
}

export default function App() {
  return (
    <div className="flex h-[1080px] w-[1920px] overflow-hidden bg-white pt-20 font-['Roboto',sans-serif]">
      <Sidebar />
      <main className="flex h-[935px] w-[1850px] flex-col">
        <Toolbar />
        <section className="relative h-[855px] shrink-0">
          <Chart />
          <Legends />
        </section>
        <BottomBar />
      </main>
    </div>
  );
}
